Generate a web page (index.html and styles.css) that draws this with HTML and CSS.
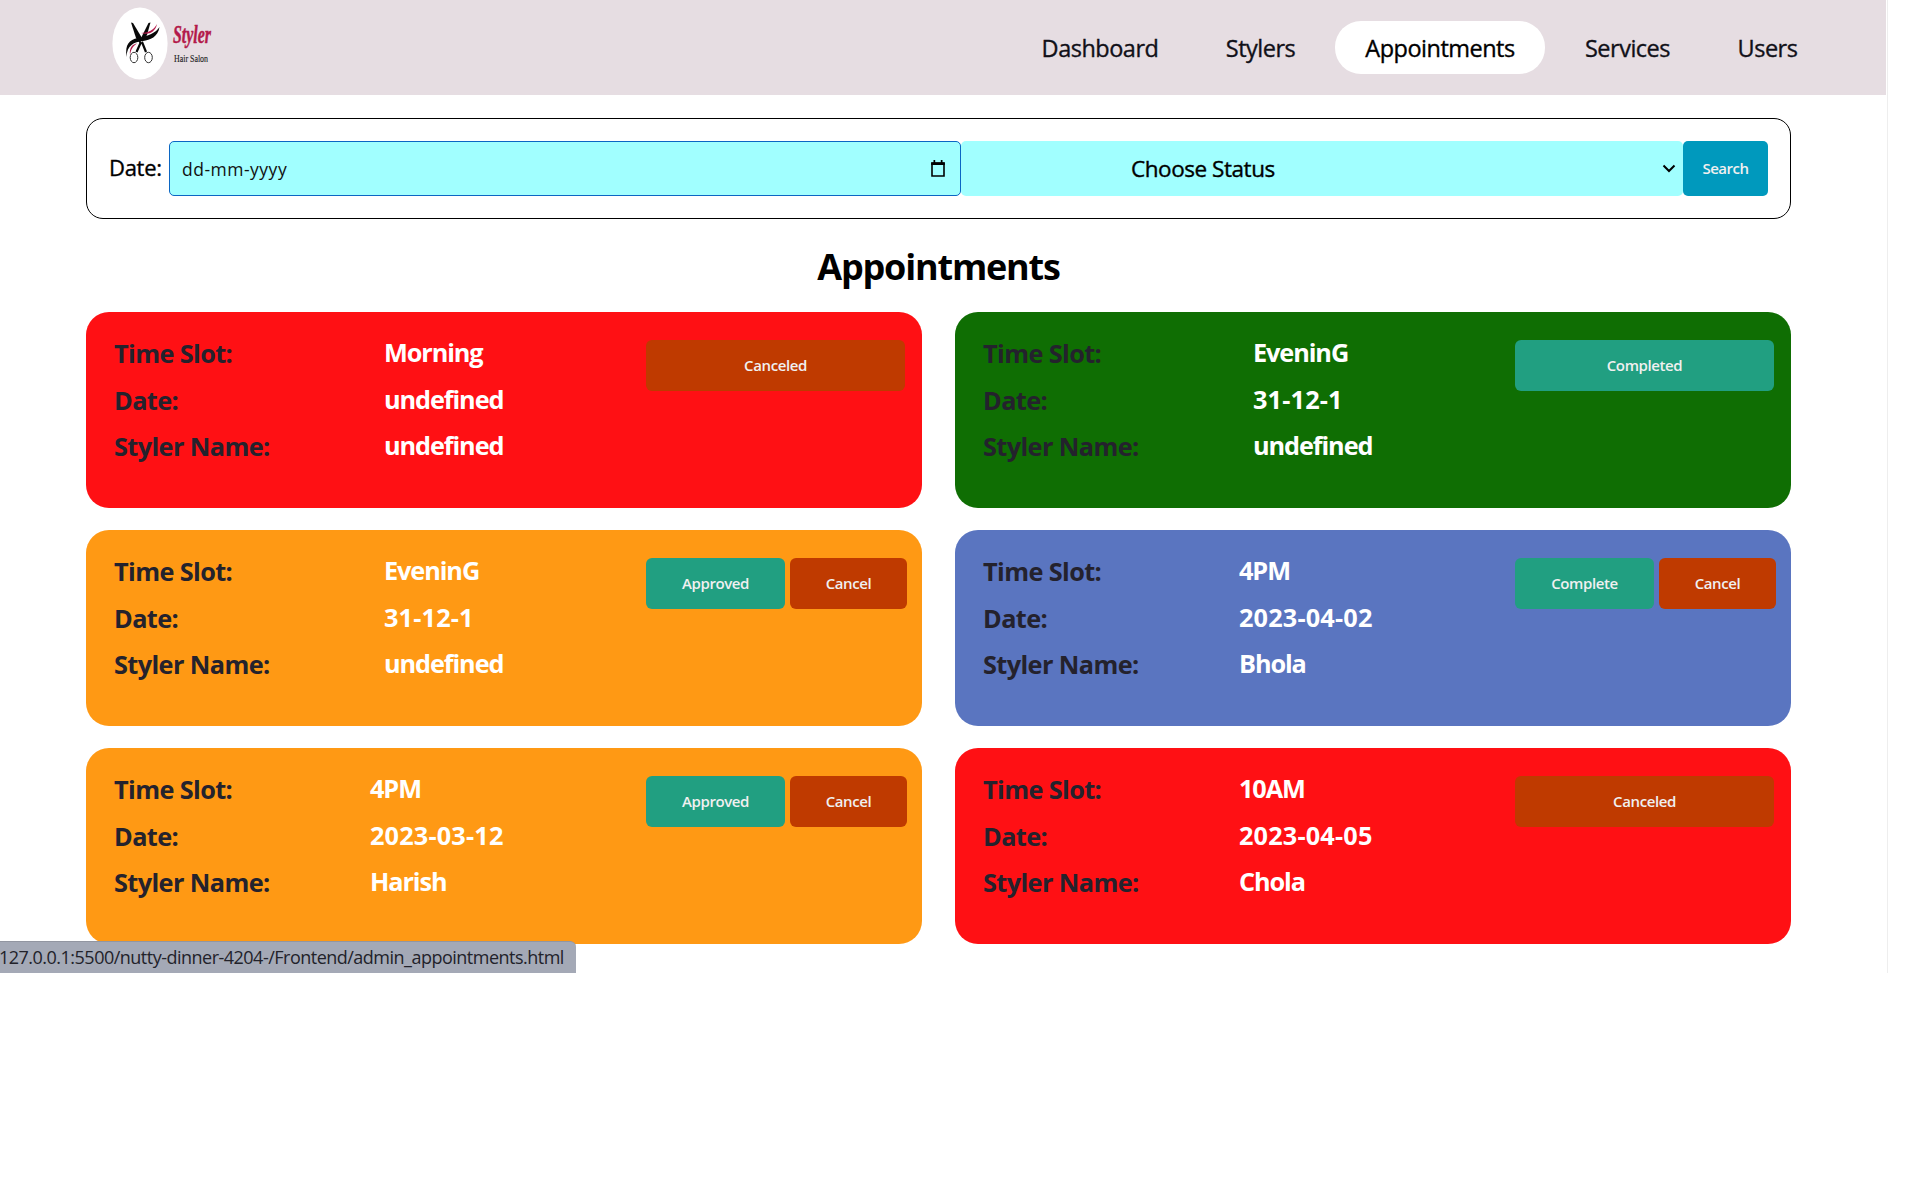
FILE: index.html
```html
<!DOCTYPE html>
<html lang="en">
<head>
<meta charset="utf-8">
<title>Appointments</title>
<link rel="stylesheet" href="styles.css">
</head>
<body>
<div class="page">
  <header class="topbar">
    <svg class="logo" width="140" height="95" viewBox="0 0 140 95">
      <ellipse cx="40" cy="43.4" rx="27.6" ry="36" fill="#fff"/>
      <path d="M31 22.500L33 23 42 38 40 43.500 36 38Z" fill="#080808"/>
      <path d="M50.500 22.500L48.500 23 41.500 37 42 42 47 35Z" fill="#080808"/>
      <path d="M26.500 57C25 44 29 40 38 38 48 36 56 33 59.500 27 58 37 50 40 43 41 34 42 27 45 26.500 57Z" fill="#080808"/>
      <path d="M30 55C29 47 33 44 37 43.500 32 47 31 50 30 55ZM41 33C48 33 54 30 57 24 55 33 48 35 41 33Z" fill="#b3194a"/>
      <path d="M41 42L36.500 52M42 42L46 52" stroke="#080808" stroke-width="2.200" fill="none"/>
      <ellipse cx="34" cy="57.500" rx="3.800" ry="5.200" fill="none" stroke="#333" stroke-width="1"/>
      <ellipse cx="48.500" cy="57.500" rx="3.800" ry="5.200" fill="none" stroke="#333" stroke-width="1"/>
      <text class="logo-name" x="73" y="43" textLength="38" lengthAdjust="spacingAndGlyphs">Styler</text>
      <text class="logo-sub" x="74" y="61.500" textLength="34" lengthAdjust="spacingAndGlyphs">Hair Salon</text>
    </svg>
    <nav class="nav">
      <a class="nav-link w-dash">Dashboard</a>
      <a class="nav-link w-stylers">Stylers</a>
      <a class="nav-link w-app active">Appointments</a>
      <a class="nav-link w-serv">Services</a>
      <a class="nav-link w-users">Users</a>
    </nav>
  </header>
  <main class="main">
    <form class="filter">
      <span class="filter-label">Date:</span>
      <div class="date-field">
        <span>dd-mm-yyyy</span>
        <svg width="16" height="18" viewBox="0 0 16 18"><path d="M2 3H14V16H2Z" fill="none" stroke="#000" stroke-width="1.600"/><path d="M1.200 2.500H14.800V5H1.200ZM3.500 0H5.200V3H3.500ZM10.800 0H12.500V3H10.800Z" fill="#000"/></svg>
      </div>
      <div class="status-field">
        <span>Choose Status</span>
        <svg width="14" height="9" viewBox="0 0 14 9"><path d="M1.500 1.500L7 7 12.500 1.500" fill="none" stroke="#000" stroke-width="2"/></svg>
      </div>
      <div class="search">Search</div>
    </form>
    <h1 class="title"><span>Appointments</span></h1>
    <section class="cards">
      <article class="card red">
        <div class="labels"><div>Time Slot:</div><div>Date:</div><div>Styler Name:</div></div>
        <div class="values"><div>Morning</div><div>undefined</div><div>undefined</div></div>
        <div class="actions"><span class="btn rust full">Canceled</span></div>
      </article>
      <article class="card green">
        <div class="labels"><div>Time Slot:</div><div>Date:</div><div>Styler Name:</div></div>
        <div class="values"><div>EveninG</div><div class="num">31-12-1</div><div>undefined</div></div>
        <div class="actions"><span class="btn teal full">Completed</span></div>
      </article>
      <article class="card orange">
        <div class="labels"><div>Time Slot:</div><div>Date:</div><div>Styler Name:</div></div>
        <div class="values"><div>EveninG</div><div class="num">31-12-1</div><div>undefined</div></div>
        <div class="actions"><span class="btn teal">Approved</span><span class="btn rust">Cancel</span></div>
      </article>
      <article class="card blue wide">
        <div class="labels"><div>Time Slot:</div><div>Date:</div><div>Styler Name:</div></div>
        <div class="values"><div>4PM</div><div class="num">2023-04-02</div><div>Bhola</div></div>
        <div class="actions"><span class="btn teal">Complete</span><span class="btn rust">Cancel</span></div>
      </article>
      <article class="card orange wide">
        <div class="labels"><div>Time Slot:</div><div>Date:</div><div>Styler Name:</div></div>
        <div class="values"><div>4PM</div><div class="num">2023-03-12</div><div>Harish</div></div>
        <div class="actions"><span class="btn teal">Approved</span><span class="btn rust">Cancel</span></div>
      </article>
      <article class="card red wide">
        <div class="labels"><div>Time Slot:</div><div>Date:</div><div>Styler Name:</div></div>
        <div class="values"><div>10AM</div><div class="num">2023-04-05</div><div>Chola</div></div>
        <div class="actions"><span class="btn rust full">Canceled</span></div>
      </article>
    </section>
  </main>
  <div class="statusbar">127.0.0.1:5500/nutty-dinner-4204-/Frontend/admin_appointments.html</div>
</div>
</body>
</html>
```
FILE: styles.css
```css
* { box-sizing: border-box; }
body { margin: 0; background: #fff; color: #000; font-family: "Open Sans", "Noto Sans", sans-serif; white-space: nowrap; }
.page { position: relative; width: 1888px; height: 973px; border-right: 1px solid #eee; }
.topbar { width: 1886px; height: 95px; background: #e6dde2; display: flex; justify-content: space-between; padding: 0 61px 0 100px; }
.logo { display: block; }
.logo-name { font: italic bold 25px "Liberation Serif", serif; fill: #b3194a; stroke: #b3194a; stroke-width: .5px; }
.logo-sub { font: 10.5px "Liberation Serif", serif; fill: #222; stroke: #222; stroke-width: .15px; }
.nav { display: flex; gap: 11px; padding-top: 21px; }
.nav-link { height: 53px; border-radius: 26px; display: flex; justify-content: center; font-size: 23.5px; line-height: 54px; font-weight: 500; letter-spacing: -.5px; color: #111018; -webkit-text-stroke: .35px currentColor; }
.nav-link.active { background: #fff; color: #000; }
.w-dash { width: 172px; }
.w-stylers { width: 127px; }
.w-app { width: 210px; }
.w-serv { width: 143px; }
.w-users { width: 115px; }
.main { padding: 23px 0 0 86px; width: 1791px; }
.filter { display: flex; height: 101px; border: 1px solid #000; border-radius: 17px; padding: 22px; }
.filter-label { width: 60px; font-size: 22px; line-height: 53px; font-weight: 500; letter-spacing: -.3px; -webkit-text-stroke: .35px currentColor; }
.date-field { width: 792px; height: 55px; background: #a1ffff; border: 1px solid #0b66c3; border-radius: 5px; display: flex; align-items: center; justify-content: space-between; padding: 0 14px 0 12px; font-size: 17.5px; font-weight: 400; letter-spacing: .5px; color: #111; }
.status-field { width: 722px; height: 55px; background: #a1ffff; border-radius: 5px; display: flex; align-items: center; justify-content: space-between; padding: 0 7px 0 170px; font-size: 22.5px; font-weight: 500; letter-spacing: -.45px; -webkit-text-stroke: .35px currentColor; }
.search { width: 85px; height: 55px; border-radius: 5px; background: #0099bd; color: #f0f0f0; font-size: 15px; font-weight: 600; line-height: 55px; text-align: center; letter-spacing: -.5px; }
.title { margin: 0; height: 93px; text-align: center; font-size: 36px; font-weight: 700; line-height: 96px; letter-spacing: -1.2px; }
.cards { display: grid; grid-template-columns: 836px 836px; gap: 22px 33px; }
.card { height: 196px; border-radius: 23px; display: flex; padding: 18px 0 0 28px; font-size: 25.3px; line-height: 46.5px; font-weight: 700; }
.labels { width: 270px; color: #24222d; letter-spacing: -.6px; }
.values { width: 262px; color: #fff; margin-top: -1px; letter-spacing: -1.1px; }
.values .num { letter-spacing: .15px; }
.wide .labels { width: 256px; }
.wide .values { width: 276px; }
.actions { display: flex; gap: 5px; padding-top: 10px; }
.btn { width: 139px; height: 51px; border-radius: 6px; color: #f0f0f0; font-size: 15px; font-weight: 600; line-height: 51px; text-align: center; letter-spacing: -.4px; }
.teal { background: #219f81; }
.rust { background: #bf3a00; width: 117px; }
.btn.full { width: 259px; }
.red { background: #ff1014; }
.green { background: #0f6e03; }
.orange { background: #ff9914; }
.blue { background: #5a75c0; }
.statusbar { position: absolute; left: 0; top: 941px; width: 576px; height: 32px; background: #a4a9b6; border-top: 1px solid #9296a1; border-top-right-radius: 6px; font-size: 18px; line-height: 31px; letter-spacing: -.51px; text-indent: -1px; color: #22222a; }
```
